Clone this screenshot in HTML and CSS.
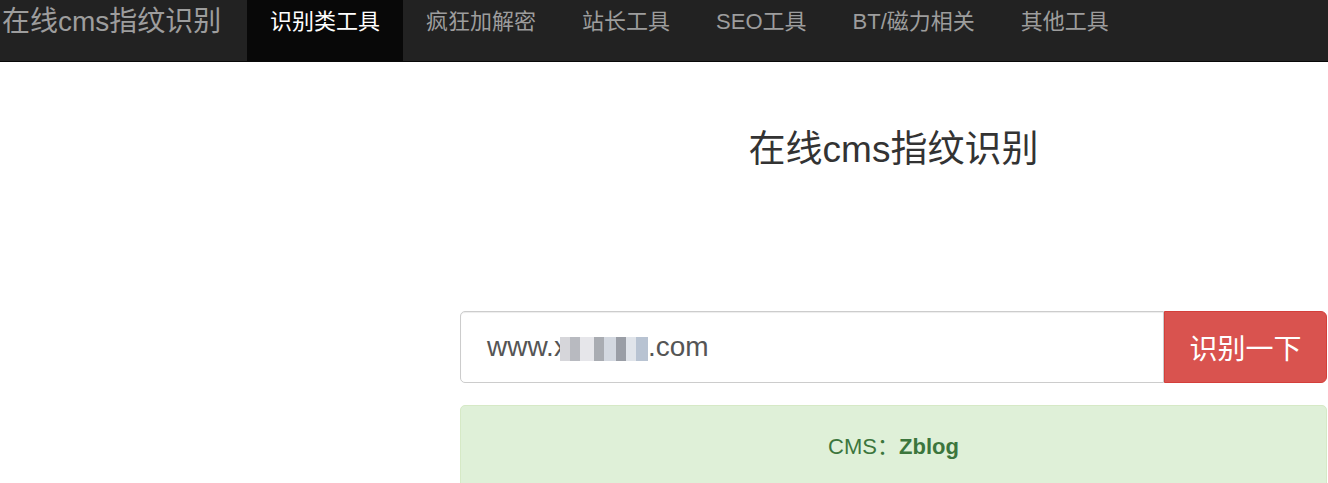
FILE: index.html
```html
<!DOCTYPE html>
<html lang="zh-CN">
<head>
    <meta charset="UTF-8"/>
    <meta name="viewport" content="width=device-width,initial-scale=1.0"/>
    <title>在线cms指纹识别</title>
    <link rel="stylesheet" href="styles.css">
</head>
<body>
<nav class="navbar">
    <a class="brand" href="#">在线cms指纹识别</a>
    <ul class="nav">
        <li class="active"><a href="#">识别类工具</a></li>
        <li><a href="#">疯狂加解密</a></li>
        <li><a href="#">站长工具</a></li>
        <li><a href="#">SEO工具</a></li>
        <li><a href="#">BT/磁力相关</a></li>
        <li><a href="#">其他工具</a></li>
    </ul>
</nav>

<div class="main">
    <h1>在线cms指纹识别</h1>

    <div class="input-group">
        <div class="form-control">www.x<span class="masked"></span>.com</div>
        <button class="btn-danger">识别一下</button>
    </div>

    <div class="alert-success">CMS：<b>Zblog</b></div>
</div>
</body>
</html>
```

FILE: styles.css
```css
* {
    margin: 0;
    padding: 0;
    box-sizing: border-box
}

body {
    font-family: 'Liberation Sans', 'Noto Sans CJK SC', sans-serif;
    background: #fff;
    color: #333;
    overflow: hidden
}

a {
    text-decoration: none
}

.navbar {
    display: flex;
    height: 62px;
    background: #222;
    border-bottom: 1px solid #080808
}

.brand {
    width: 247px;
    font-size: 28px;
    line-height: 32px;
    padding: 6px 0 0 2px;
    white-space: nowrap;
    color: #9d9d9d
}

.nav {
    display: flex;
    list-style: none
}

.nav li a {
    display: block;
    height: 61px;
    padding: 9px 23px 0;
    font-size: 22px;
    line-height: 26px;
    color: #9d9d9d
}

.nav li.active a {
    background: #080808;
    color: #fff
}

.main {
    padding: 0 1px 0 460px
}

h1 {
    margin-top: 66px;
    font-size: 37px;
    line-height: 44px;
    font-weight: normal;
    text-align: center;
    color: #333
}

.input-group {
    display: flex;
    height: 72px;
    margin-top: 139px
}

.form-control {
    flex: 1;
    display: flex;
    align-items: center;
    padding: 0 26px;
    font-size: 28px;
    color: #555;
    border: 1px solid #ccc;
    border-radius: 5px 0 0 5px;
    box-shadow: inset 0 1px 1px rgba(0, 0, 0, .075)
}

.masked {
    display: inline-block;
    width: 88px;
    height: 24px;
    margin: 3px 0 0 -8px;
    background: linear-gradient(to right, #d6d6da 0, #d6d6da 10px, #b8bac0 10px, #b8bac0 20px, #e6e6ea 20px, #e6e6ea 34px,
    #a9acb2 34px, #a9acb2 44px, #d3d8e0 44px, #d3d8e0 56px, #9a9ea6 56px, #9a9ea6 66px, #e0e4ea 66px, #e0e4ea 76px,
    #b8c3d2 76px)
}

.btn-danger {
    width: 163px;
    font-family: inherit;
    font-size: 28px;
    color: #fff;
    background: #d9534f;
    border: 1px solid #d43f3a;
    border-radius: 0 6px 6px 0;
    cursor: pointer
}

.alert-success {
    margin-top: 22px;
    height: 100px;
    padding-top: 27px;
    font-size: 22px;
    line-height: 28px;
    text-align: center;
    color: #3c763d;
    background: #dff0d8;
    border: 1px solid #d6e9c6;
    border-radius: 5px
}
```
